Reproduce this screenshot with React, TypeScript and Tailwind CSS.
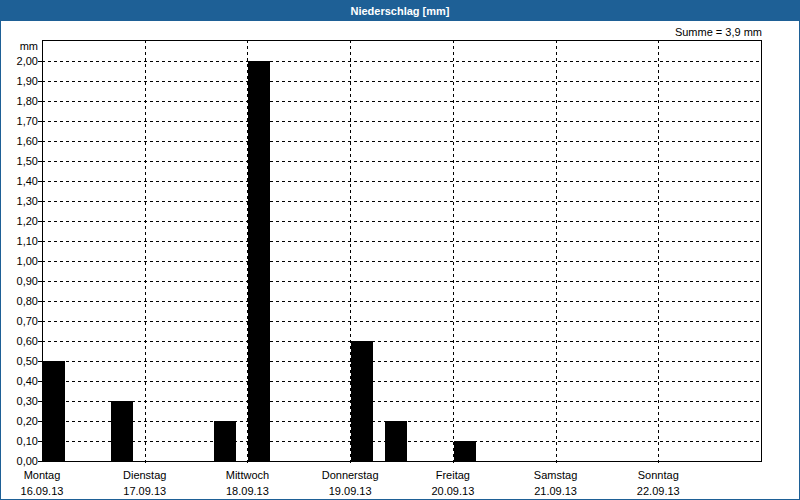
export default function App() {
  const x0 = 41, x1 = 760, yb = 461, yt = 40;
  const dayW = (x1 - x0) / 7;
  const y = (v: number) => yb - v * 200;
  const ticks = Array.from({ length: 21 }, (_, i) => i / 10);
  const bars: [number, number][] = [
    [0, 0.5], [2, 0.3], [5, 0.2], [6, 2.0], [9, 0.6], [10, 0.2], [12, 0.1],
  ];
  const days = [
    ["Montag", "16.09.13"], ["Dienstag", "17.09.13"], ["Mittwoch", "18.09.13"],
    ["Donnerstag", "19.09.13"], ["Freitag", "20.09.13"], ["Samstag", "21.09.13"], ["Sonntag", "22.09.13"],
  ];
  return (
    <div className="w-[800px] h-[500px] flex flex-col border border-[#1e6096] bg-white" style={{ fontFamily: '"Liberation Sans", Arial, sans-serif' }}>
      <div className="h-[20px] bg-[#1e6096] text-white text-[11px] font-bold flex items-center justify-center shrink-0">
        Niederschlag [mm]
      </div>
      <svg width="798" height="478" viewBox="0 21 798 478" className="block" fontSize="11" fontFamily='"Liberation Sans", Arial, sans-serif'>
        <text x="761" y="36" textAnchor="end" fill="#000">Summe = 3,9 mm</text>
        <text x="37" y="50" textAnchor="end" fill="#000">mm</text>
        {ticks.map((v, i) => (
          <g key={i}>
            {i > 0 && <line x1={x0} x2={x1} y1={y(v) + 0.5} y2={y(v) + 0.5} stroke="#000" strokeDasharray="3 3" />}
            <line x1={x0 - 4} x2={x0} y1={y(v) + 0.5} y2={y(v) + 0.5} stroke="#000" />
            <text x="37" y={y(v) + 4} textAnchor="end" fill="#000">{v.toFixed(2).replace(".", ",")}</text>
          </g>
        ))}
        {[1, 2, 3, 4, 5, 6].map((k) => {
          const xx = Math.round(x0 + k * dayW) + 0.5;
          return <line key={k} x1={xx} x2={xx} y1={yt} y2={yb + 4} stroke="#000" strokeDasharray="3 3" />;
        })}
        {bars.map(([s, v], i) => {
          const bx = Math.round(x0 + s * dayW / 3) + 1;
          return <rect key={i} x={bx} y={y(v)} width={22} height={yb - y(v)} fill="#000" />;
        })}
        <rect x={x0 + 0.5} y={yt + 0.5} width={x1 - x0} height={yb - yt} fill="none" stroke="#000" />
        {days.map(([d, dt], k) => {
          const cx = x0 + k * dayW;
          return (
            <g key={k}>
              <text x={cx} y="479" textAnchor="middle" fill="#000">{d}</text>
              <text x={cx} y="495" textAnchor="middle" fill="#000">{dt}</text>
            </g>
          );
        })}
      </svg>
    </div>
  );
}
